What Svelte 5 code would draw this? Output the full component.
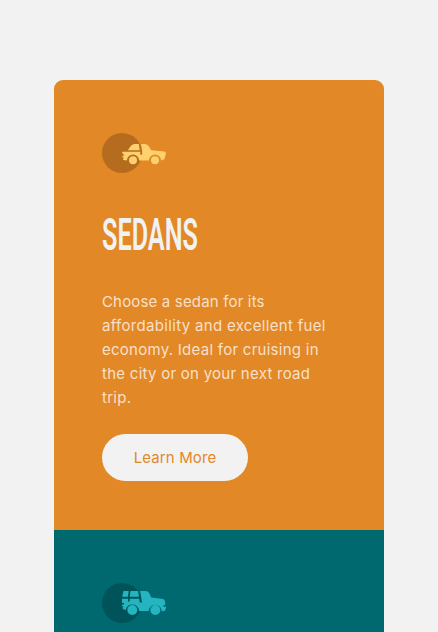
<script>
  const sedanLines = [
    { text: 'Choose a sedan for its', width: 162.5 },
    { text: 'affordability and excellent fuel', width: 223.5 },
    { text: 'economy. Ideal for cruising in', width: 216.5 },
    { text: 'the city or on your next road', width: 208 },
    { text: 'trip.', width: 29 }
  ];

  // Tracks a line of text out to its intended measure.
  function fit(node, width) {
    const natural = node.getBoundingClientRect().width;
    node.style.letterSpacing = (width - natural) / (node.textContent.length - 1) + 'px';
  }
</script>

<main>
  <section class="card sedans">
    <svg class="icon" width="64" height="40" viewBox="0 0 64 40" aria-hidden="true">
      <circle cx="20" cy="20" r="20" fill="#000" fill-opacity=".2" />
      <g fill="#ffd06e">
        <path d="M25.8 17.2C28.2 14.4 29.5 11.2 32.5 11H36.8L37.8 17.2Z" />
        <path d="M39 11H42.5C46.5 11 47.7 14.8 49.3 17.3L62.3 18.5Q64 18.8 63.9 21L62.7 24.5V26L59.1 27.6A6.1 6.1 0 0 0 46.9 27.6H37.1A6.1 6.1 0 0 0 24.9 27.6L21.2 27V25.6L22.3 24.5H20.5V22.6H22.7L20.2 20V18.7H38.3V21.7H40.2V17.8Z" />
        <circle cx="31" cy="27.3" r="4" />
        <circle cx="53" cy="27.3" r="4" />
      </g>
    </svg>
    <svg class="title" width="98" height="48" role="heading" aria-level="2">
      <text x="0" y="37" textLength="96" lengthAdjust="spacingAndGlyphs">SEDANS</text>
    </svg>
    <p>
      {#each sedanLines as line}
        <span class="line"><span use:fit={line.width}>{line.text}</span></span>
      {/each}
    </p>
    <button><span use:fit={82.5}>Learn More</span></button>
  </section>
  <section class="card suvs">
    <svg class="icon" width="64" height="40" viewBox="0 0 64 40" aria-hidden="true">
      <circle cx="20" cy="20" r="20" fill="#000" fill-opacity=".2" />
      <g fill="#24b5c1">
        <path d="M21.5 8H26.7L26 13.8H20.2Z" />
        <path d="M28.5 8H36L37 13.8H27.8Z" />
        <path d="M38.2 8H43Q46.4 8 47.3 10.2L49.2 14.5L61 16Q63 16.4 63.2 20V22H61.5V23.7H64V25.5L62.5 28L59.7 28.3A6.5 6.5 0 0 0 46.7 28H37A6.7 6.7 0 0 0 23.7 27L20.8 26V24.3L22.3 23.5H20V21.5H22V20H20V15.7H26V18.5H27.8V15.7H37.2L37.8 19.5H40Z" />
        <circle cx="30.3" cy="27" r="5" />
        <circle cx="53.3" cy="27" r="5" />
      </g>
    </svg>
  </section>
</main>

<style>
  :global(body) {
    margin: 0;
    background: #f2f2f2;
  }
  main {
    box-sizing: border-box;
    height: 632px;
    padding: 80px 54px 0;
    overflow: hidden;
    font-family: Inter, 'Liberation Sans', sans-serif;
  }
  .card {
    box-sizing: border-box;
    display: flex;
    flex-direction: column;
    align-items: flex-start;
    height: 450px;
    padding: 53px 48px 48px;
  }
  .sedans {
    background: #e38826;
    border-radius: 9px 9px 0 0;
  }
  .suvs {
    background: #006970;
  }
  .icon {
    flex: none;
    overflow: visible;
  }
  .title {
    flex: none;
    margin-top: 40px;
    overflow: visible;
    font-family: Roboto, sans-serif;
    font-size: 44.5px;
    font-weight: 600;
    fill: #f2f2f2;
  }
  p {
    margin: 29px 0 0;
    font-size: 15px;
    line-height: 24px;
    color: rgba(255, 255, 255, 0.75);
  }
  .line {
    display: block;
    white-space: nowrap;
  }
  button {
    display: flex;
    align-items: center;
    justify-content: center;
    width: 146px;
    height: 47px;
    margin-top: 24px;
    padding: 0;
    border: 0;
    border-radius: 24px;
    background: #f2f2f2;
    color: #e38826;
    font: 15px Inter, sans-serif;
    white-space: nowrap;
  }
</style>
